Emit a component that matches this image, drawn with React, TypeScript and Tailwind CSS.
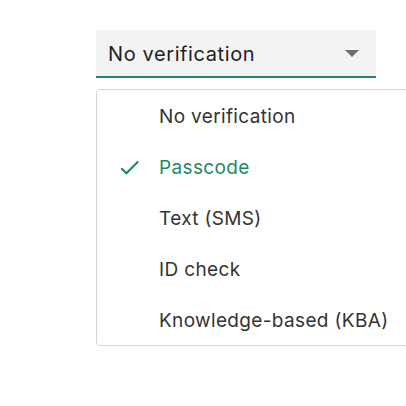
import * as React from "react";

const options = [
  "No verification",
  "Passcode",
  "Text (SMS)",
  "ID check",
  "Knowledge-based (KBA)",
];

export default function App() {
  const [selected] = React.useState("Passcode");

  return (
    <div className="relative h-[406px] w-[406px] overflow-hidden bg-white font-['Inter',sans-serif]">
      <div className="absolute left-[96px] top-[30px] w-[280px]">
        <button
          type="button"
          className="flex h-[48px] w-full items-center justify-between border-b-2 border-[#1d8865] bg-[#f3f3f3] pl-[12px] pr-[17px] text-left text-[20px] tracking-[0.6px] text-[#222]"
        >
          <span className="pt-[1px]">No verification</span>
          <svg width="14" height="7" viewBox="0 0 14 7" aria-hidden="true">
            <path d="M0 0h14L7 7z" fill="#6e6e6e" />
          </svg>
        </button>
      </div>

      <div className="absolute left-[96px] top-[89px] w-[330px] rounded-[4px] border border-[#d6d6d6] bg-white">
        {options.map((o) => {
          const active = o === selected;
          return (
            <div
              key={o}
              className={`flex h-[51px] items-center text-[19px] tracking-[0.35px] ${
                active ? "text-[#1d8865]" : "text-[#333]"
              }`}
            >
              <span className="flex w-[62px] justify-center pl-[2px] pt-[2px]">
                {active && (
                  <svg width="25" height="25" viewBox="0 0 24 24" aria-hidden="true">
                    <path
                      d="M9 16.17L4.83 12l-1.42 1.41L9 19 21 7l-1.41-1.41z"
                      fill="#1d8865"
                    />
                  </svg>
                )}
              </span>
              <span className="pt-[3px]">{o}</span>
            </div>
          );
        })}
      </div>
    </div>
  );
}
